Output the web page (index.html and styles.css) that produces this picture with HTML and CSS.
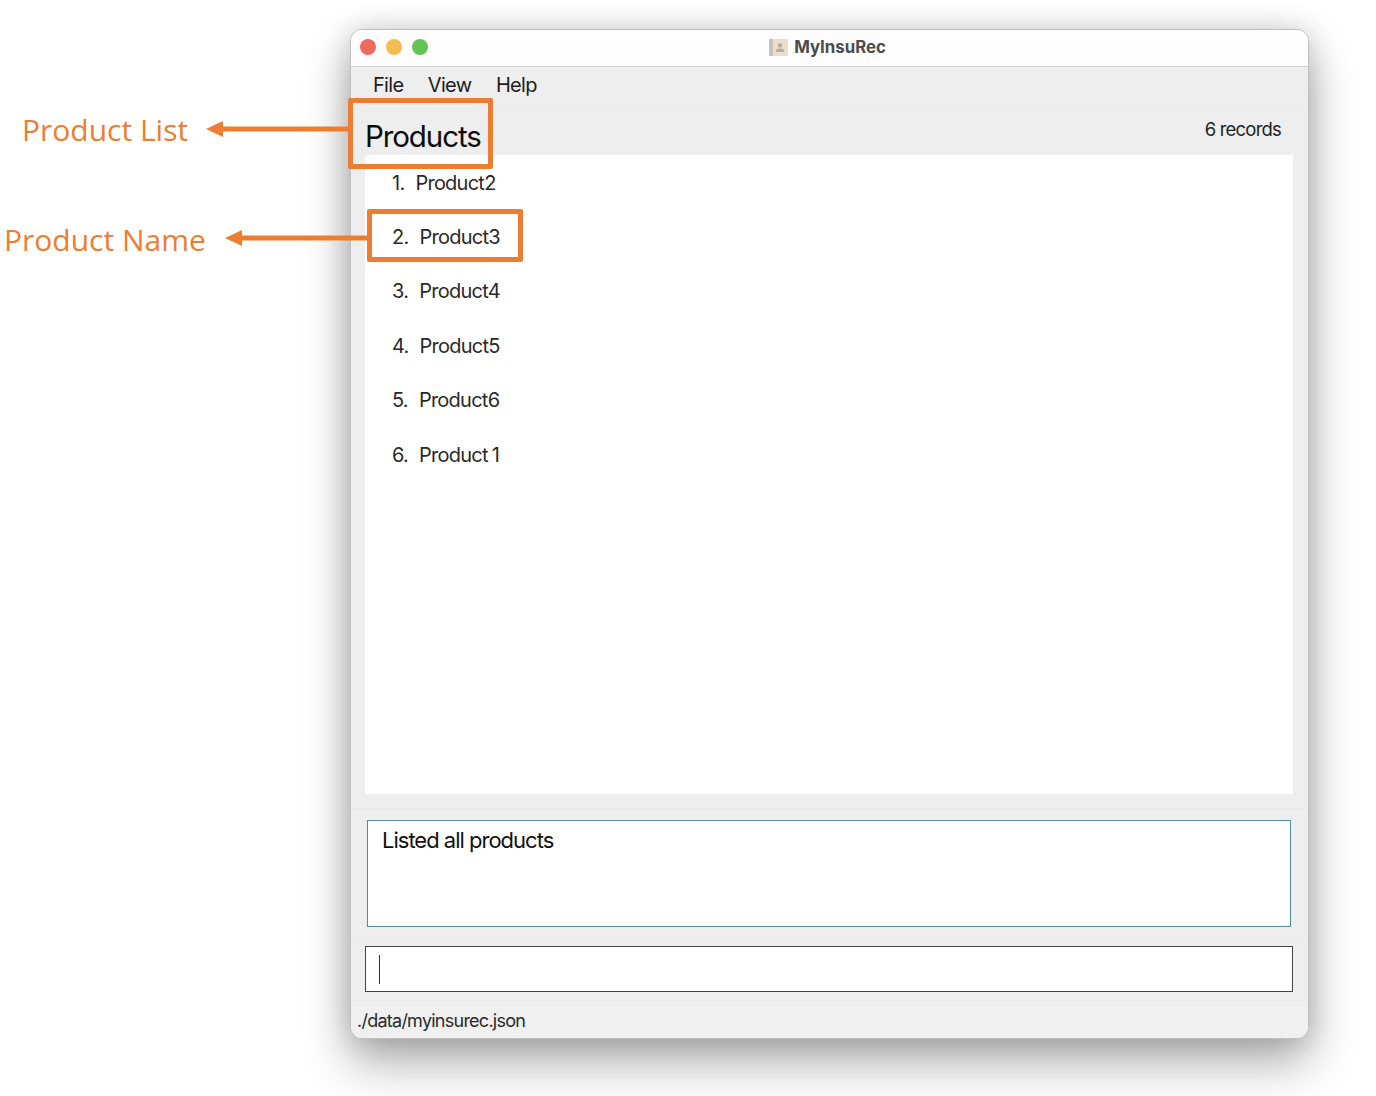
FILE: index.html
```html
<!DOCTYPE html>
<html>
<head>
  <title>MyInsuRec</title>
  <link rel="stylesheet" href="styles.css">
</head>
<body>
  <div class="window">
    <div class="titlebar">
      <div class="lights">
        <span class="light red"></span>
        <span class="light yellow"></span>
        <span class="light green"></span>
      </div>
      <div class="title">
        <svg class="title-icon" width="19" height="17" viewBox="0 0 19 17">
          <rect x="0" y="0" width="19" height="17" fill="#e9dfcb"/>
          <rect x="0" y="0" width="4" height="17" fill="#c6c2ba"/>
          <circle cx="11" cy="6.5" r="2.2" fill="#b8ad98"/>
          <path d="M6.5 13 C7 10 9 9.5 11 9.5 C13 9.5 15 10 15.5 13 Z" fill="#b8ad98"/>
        </svg>
        <span>MyInsuRec</span>
      </div>
    </div>
    <div class="menubar">
      <span>File</span>
      <span>View</span>
      <span>Help</span>
    </div>
    <div class="list-panel">
      <div class="list-header">
        <h1>Products</h1>
        <span class="count">6 records</span>
      </div>
      <ol class="product-list">
        <li><span class="num">1.</span><span>Product2</span></li>
        <li><span class="num">2.</span><span>Product3</span></li>
        <li><span class="num">3.</span><span>Product4</span></li>
        <li><span class="num">4.</span><span>Product5</span></li>
        <li><span class="num">5.</span><span>Product6</span></li>
        <li><span class="num">6.</span><span>Product 1</span></li>
      </ol>
    </div>
    <div class="result-panel">
      <div class="result-box">Listed all products</div>
    </div>
    <div class="command-panel">
      <div class="command-box"><span class="caret"></span></div>
    </div>
    <div class="statusbar">./data/myinsurec.json</div>
  </div>

  <!-- annotations drawn over the screenshot -->
  <div class="note note-list">Product List</div>
  <div class="note note-name">Product Name</div>
  <div class="callout callout-list"></div>
  <div class="callout callout-name"></div>
  <svg class="arrow arrow-list" width="143" height="18" viewBox="0 0 143 18">
    <path d="M0 9 L17 1 L17 6.5 L143 6.5 L143 11.5 L17 11.5 L17 17 Z" fill="#ed7d31"/>
  </svg>
  <svg class="arrow arrow-name" width="143" height="18" viewBox="0 0 143 18">
    <path d="M0 9 L17 1 L17 6.5 L143 6.5 L143 11.5 L17 11.5 L17 17 Z" fill="#ed7d31"/>
  </svg>
</body>
</html>
```

FILE: styles.css
```css
body {
  margin: 0;
  height: 1096px;
  overflow: hidden;
  background-color: #fff;
  font-family: Inter, "Liberation Sans", sans-serif;
  color: #1c1c1c;
}

.window {
  width: 959px;
  height: 1010px;
  margin: 29px 0 0 350px;
  box-sizing: border-box;
  display: flex;
  flex-direction: column;
  border: 1px solid #c0c0c0;
  border-radius: 12px;
  background-color: #eeeeee;
  box-shadow: 0 24px 48px rgba(0, 0, 0, 0.32), 0 0 28px rgba(0, 0, 0, 0.16);
  overflow: hidden;
}

.titlebar {
  height: 37px;
  flex: none;
  box-sizing: border-box;
  position: relative;
  display: flex;
  align-items: center;
  justify-content: center;
  padding-bottom: 2px;
  background-color: #fdfdfd;
  border-bottom: 1px solid #d2d2d2;
}

.lights {
  position: absolute;
  left: 9px;
  top: 9px;
  display: flex;
  gap: 10px;
}

.light {
  width: 16px;
  height: 16px;
  border-radius: 50%;
}

.red { background-color: #ee6a5f; }
.yellow { background-color: #f5bd4f; }
.green { background-color: #61c454; }

.title {
  margin-left: -4px;
  display: flex;
  align-items: center;
  gap: 6px;
  font-size: 16.8px;
  font-weight: 700;
  color: #4c4c4c;
}

.menubar {
  height: 38px;
  flex: none;
  box-sizing: border-box;
  display: flex;
  align-items: center;
  gap: 24.5px;
  padding: 0 0 2px 22px;
  font-size: 20px;
  letter-spacing: -0.7px;
  border-bottom: 1px solid #ebebeb;
}

.list-panel {
  flex: 1;
  min-height: 0;
  display: flex;
  flex-direction: column;
  padding: 0 15px 14px 14px;
  border-bottom: 1px solid #e9e9e9;
}

.list-header {
  height: 50px;
  flex: none;
  display: flex;
  justify-content: space-between;
  align-items: center;
}

.list-header h1 {
  margin: 11px 0 0;
  font-size: 29.5px;
  font-weight: 400;
  letter-spacing: -1.1px;
  color: #0c0c0c;
}

.count {
  margin: 0 12px 3px 0;
  font-size: 18.5px;
  letter-spacing: -0.8px;
  color: #222;
}

.product-list {
  flex: 1;
  margin: 0;
  padding: 0;
  list-style: none;
  background-color: #fff;
}

.product-list li {
  height: 54.4px;
  display: flex;
  align-items: center;
  padding-left: 27px;
  font-size: 20px;
  letter-spacing: -0.75px;
  word-spacing: -1px;
  color: #2a2a2a;
  position: relative;
  top: 0.4px;
}

.num {
  margin-right: 11px;
}

.result-panel {
  flex: none;
  height: 129px;
  box-sizing: border-box;
  padding: 11px 17px 10px 16px;
  border-bottom: 1px solid #e9e9e9;
}

.result-box {
  height: 107px;
  box-sizing: border-box;
  padding: 6px 14px;
  background-color: #fff;
  border: 1px solid #4f8c9e;
  font-size: 22px;
  letter-spacing: -1px;
  color: #111;
}

.command-panel {
  flex: none;
  height: 63px;
  box-sizing: border-box;
  padding: 8px 15px 8px 14px;
  border-bottom: 1px solid #e9e9e9;
}

.command-box {
  height: 46px;
  box-sizing: border-box;
  display: flex;
  align-items: center;
  padding-left: 13px;
  background-color: #fff;
  border: 1px solid #444;
}

.caret {
  width: 1px;
  height: 29px;
  background-color: #333;
}

.statusbar {
  flex: none;
  height: 38px;
  display: flex;
  align-items: center;
  padding-left: 6px;
  margin-bottom: -1px;
  background-color: #f0f0f0;
  font-size: 18px;
  letter-spacing: -0.75px;
  color: #2a2a2a;
}

/* annotations */
.note {
  position: absolute;
  font-family: "Open Sans", sans-serif;
  font-size: 30px;
  line-height: 40px;
  color: #ed7d31;
  white-space: nowrap;
}

.note-list { left: 22px; top: 110px; }
.note-name { left: 4px; top: 220px; }

.callout {
  position: absolute;
  box-sizing: border-box;
  border: 5px solid #ed7d31;
  border-radius: 2px;
}

.callout-list { left: 348px; top: 98px; width: 145px; height: 71px; }
.callout-name { left: 367px; top: 209px; width: 156px; height: 53px; }

.arrow { position: absolute; }
.arrow-list { left: 206px; top: 120px; }
.arrow-name { left: 225px; top: 229px; }
```
